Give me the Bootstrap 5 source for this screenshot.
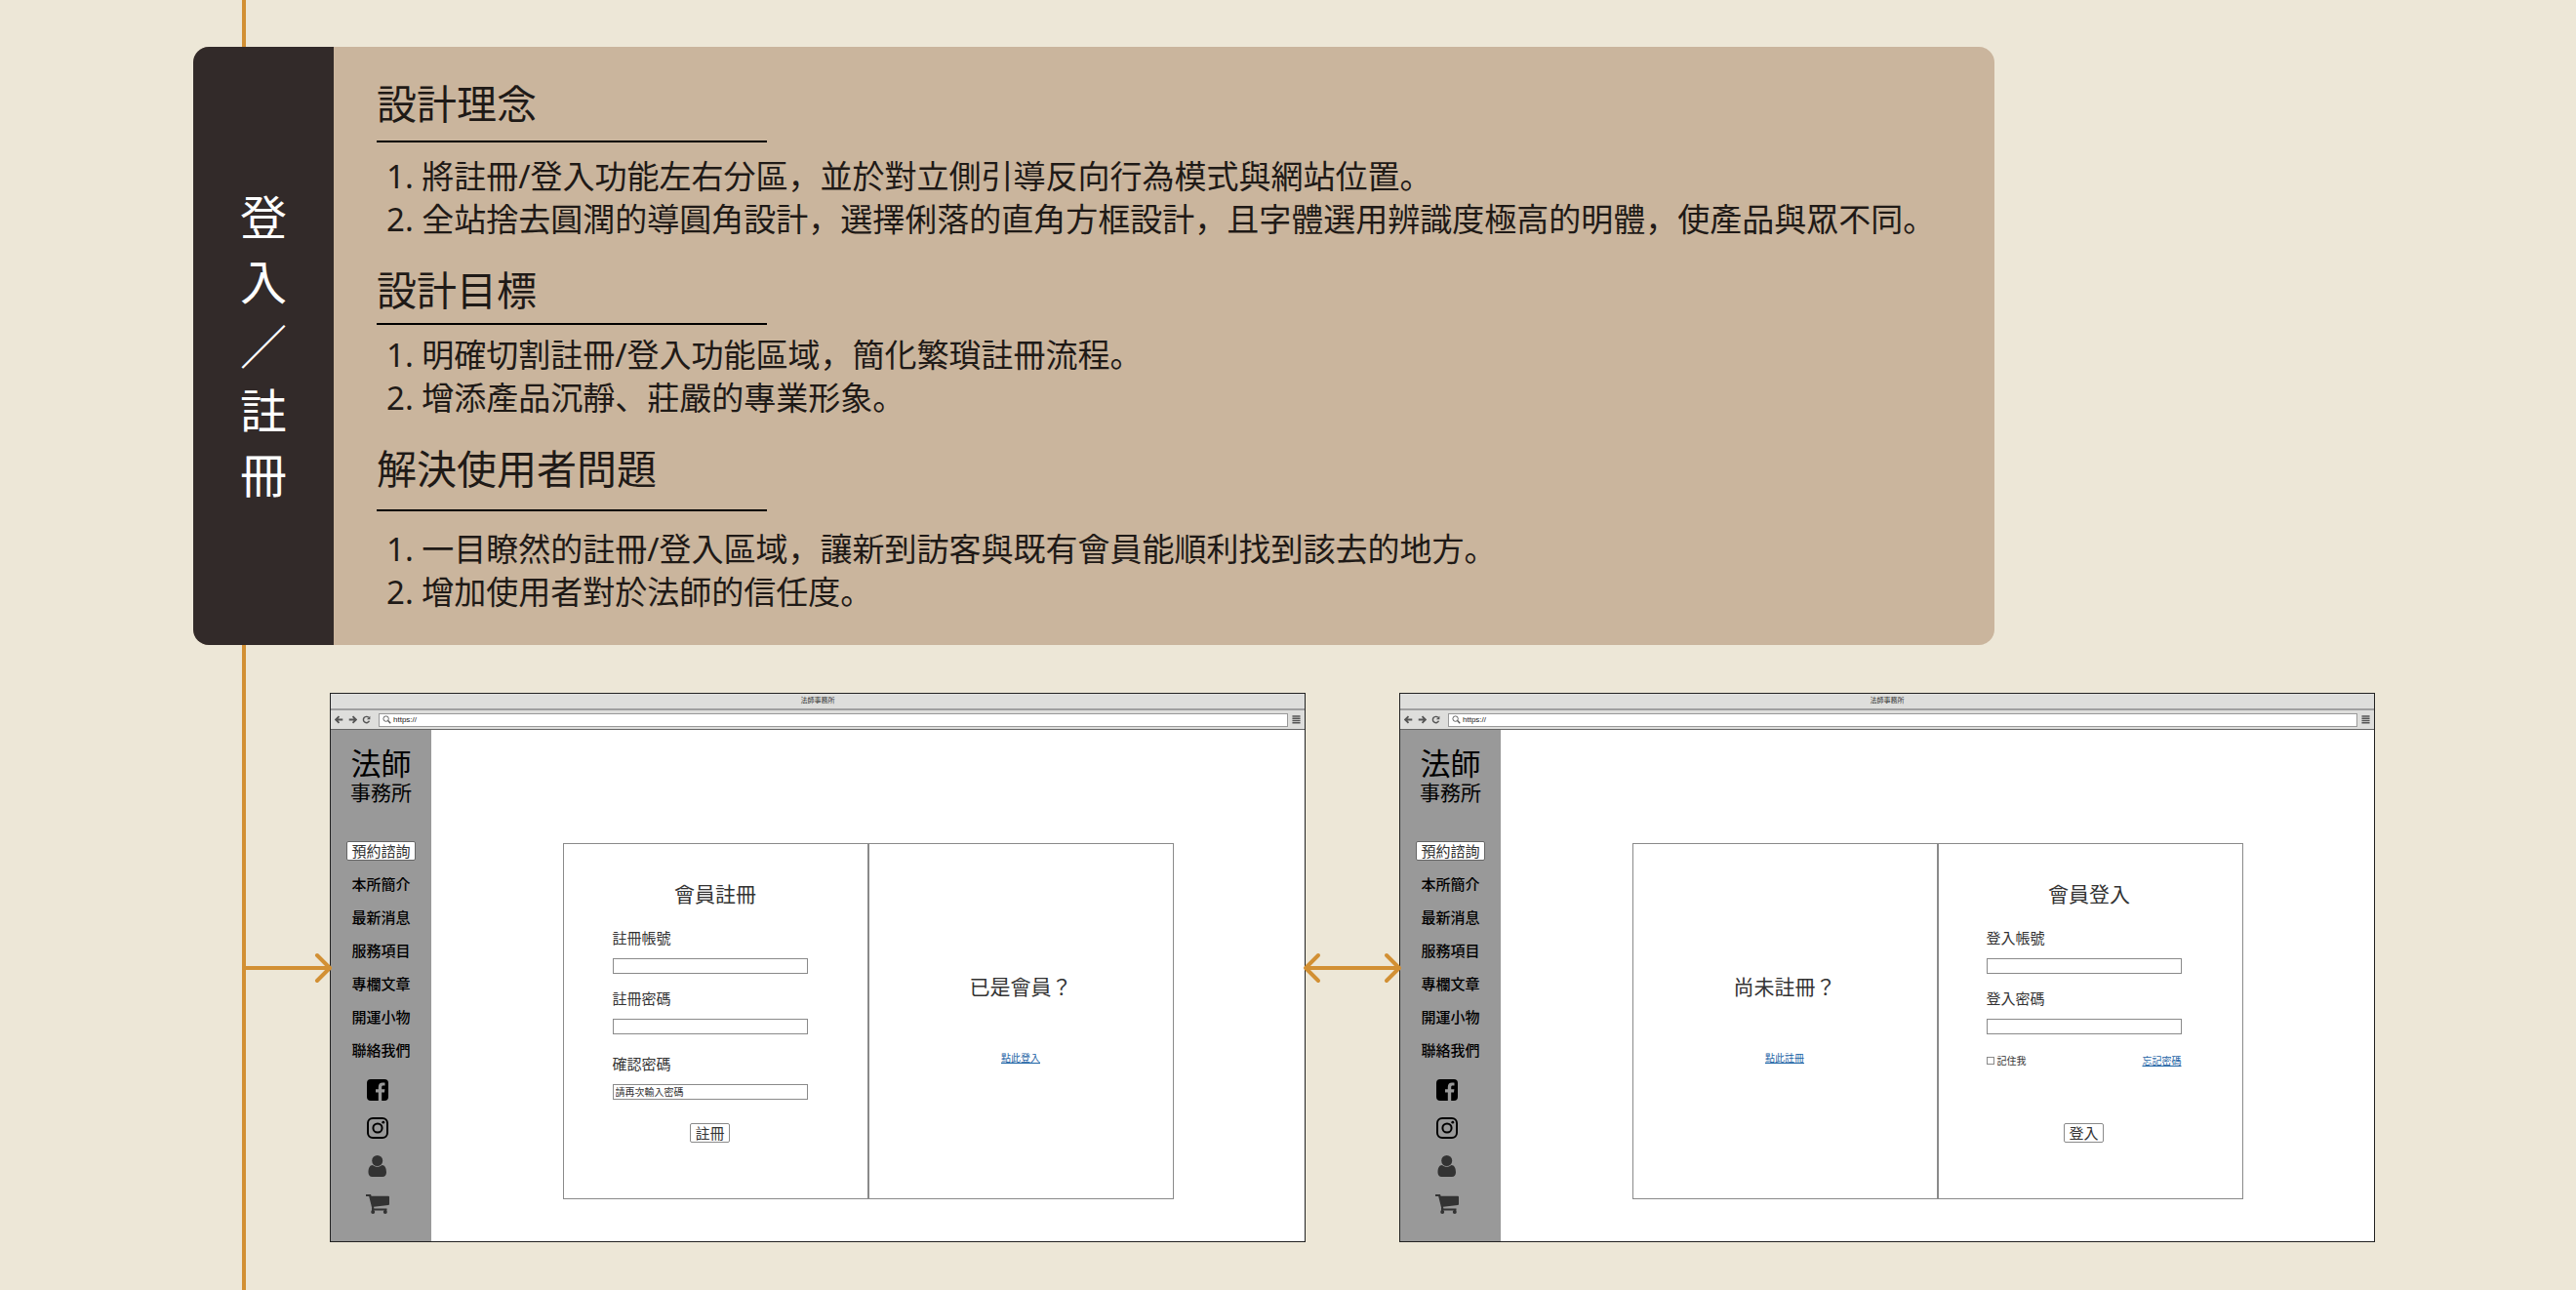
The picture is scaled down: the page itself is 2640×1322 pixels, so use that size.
<!DOCTYPE html>
<html lang="zh-Hant">
<head>
<meta charset="utf-8">
<meta name="viewport" content="width=device-width, initial-scale=1">
<title>登入／註冊</title>
<link href="https://cdn.jsdelivr.net/npm/bootstrap@5.3.0/dist/css/bootstrap.min.css" rel="stylesheet">
<style>
  :root { --paper:#ede7d7; --tan:#cab59d; --ink:#322a29; --gold:#d29034; --line:#8a8a8a; }
  body { background:var(--paper); color:#1f1a17; font-family:"Noto Sans","Noto Sans CJK JP",sans-serif; font-feature-settings:"locl" 0; }
  .board { min-height:100vh; padding:48px 206px 49px 198px; }
  /* timeline that runs behind the whole board */
  .board::before { content:""; position:absolute; top:0; bottom:0; left:248px; width:4px; background:var(--gold); }
  .brief { margin-right:390px; border-radius:16px; background:var(--tan); }
  .brief-side { width:144px; background:var(--ink); }
  .brief-side h1 { width:48px; font-size:48px; line-height:66px; font-weight:400; word-break:break-all; }
  .brief-body { padding:35px 44px 32px; }
  .topic + .topic { margin-top:27px; }
  .topic h2 { font-size:41px; line-height:46px; font-weight:400; margin:0; padding-bottom:2px; }
  .topic hr { width:400px; border:0; border-top:2px solid #000; opacity:1; margin:13px 0; }
  .topic.tight hr { margin:9px 0; }
  .topic.loose hr { margin:17px 0; }
  .topic ol { font-size:33px; line-height:44px; padding-left:10px; }
  .flow-row { padding-left:52px; margin-top:49px; }
  .link-in { width:88px; }
  .link-both { width:96px; }
  .arrow { overflow:visible; stroke:var(--gold); stroke-width:4; fill:none; stroke-linecap:round; stroke-linejoin:round; }

  .browser { border:1px solid #222; background:#fff; color:#333; min-width:0; }
  .browser-title { height:17px; font-size:7px; line-height:13px; background:#dededc; border-bottom:2px solid #a0a0a0; }
  .browser-bar { height:20px; padding:0 4px; background:#dededc; border-bottom:1px solid #666; }
  .browser-bar .tool { border:0; background:none; padding:0; width:9px; height:9px; line-height:0; margin-right:5px; }
  .browser-bar .tool svg { display:block; width:9px; height:9px; }
  .address { height:14px; border:1px solid #999; background:#fff; padding:0 3px; margin:0 4px 0 3px; }
  .address input { font-size:8px; line-height:10px; height:12px; border:0; padding:0 0 0 2px; color:#222; font-family:"Liberation Sans",sans-serif; outline:0; }
  .rail { width:103px; padding-top:17px; background:#999; color:#000; }
  .brand-lg { font-size:31px; line-height:34px; }
  .brand-sm { font-size:21px; line-height:26px; }
  .rail a { color:#000; text-decoration:none; font-size:15px; line-height:20px; font-weight:500; }
  .rail ul { gap:14px; margin-top:37px; }
  .rail .book { width:71px; height:20px; border:1px solid #666; border-radius:2px; background:#fff; color:#333; font-size:15px; line-height:17px; padding:0; }
  .rail .icons { gap:17px; padding-right:7px; margin-top:20px; }
  .rail .icons a { line-height:0; }
  .stage { padding:116px 0 43px; }
  .duo { width:626px; height:365px; border:1px solid var(--line); }
  .duo > :first-child { width:calc(50% + 1px); border-right:2px solid var(--line); }
  .duo > :last-child { width:calc(50% - 1px); }
  .duo h3 { font-size:21px; line-height:26px; font-weight:400; margin:0; }
  .duo a { font-size:10px; line-height:14px; color:#1c63a5; }
  .prompt { padding-top:133px; }
  .prompt a { margin-top:53px; }
  .entry { padding:38px 61px 0 50px; }
  .entry:last-child { padding-left:49px; padding-right:62px; }
  .entry h3 { margin-right:-11px; text-align:center; }
  .entry .field-name { display:block; font-size:15px; line-height:20px; }
  .entry .field { display:block; width:100%; height:16px; border:1px solid var(--line); padding:0 2px; margin-top:11px; font-size:10px; line-height:14px; color:#333; outline:0; }
  .entry .field::placeholder { color:#333; opacity:1; }
  .entry .group { margin-top:15px; }
  .entry .group:first-of-type { margin-top:22px; }
  .entry .group.far { margin-top:20px; }
  .entry .go { width:41px; height:20px; border:1px solid var(--line); border-radius:2px; background:#fff; color:#333; font-size:15px; line-height:17px; padding:0; }
  .keep { font-size:10px; line-height:14px; margin-top:20px; margin-bottom:57px; }
  .keep input { appearance:none; width:8px; height:8px; border:1px solid var(--line); margin:0 3px 0 0; }
</style>
<script src="https://cdn.jsdelivr.net/npm/bootstrap@5.3.0/dist/js/bootstrap.bundle.min.js"></script>
</head>
<body>
<svg width="0" height="0" class="position-absolute" aria-hidden="true">
  <symbol id="i-back" viewBox="0 0 10 10"><path d="M5 1.2 1.2 5 5 8.8M1.5 5H9.2" fill="none" stroke="#555" stroke-width="2"/></symbol>
  <symbol id="i-next" viewBox="0 0 10 10"><path d="M5 1.2 8.8 5 5 8.8M8.5 5H.8" fill="none" stroke="#555" stroke-width="2"/></symbol>
  <symbol id="i-reload" viewBox="0 0 10 10"><path d="M8.3 6.4A3.5 3.5 0 1 1 7.6 2.6" fill="none" stroke="#555" stroke-width="1.6"/><path d="M9.3.8V4.6H5.5Z" fill="#555"/></symbol>
  <symbol id="i-find" viewBox="0 0 10 10"><circle cx="4" cy="4" r="3" fill="none" stroke="#555"/><path d="M6.2 6.2 9.2 9.2" stroke="#555" stroke-width="1.5"/></symbol>
  <symbol id="i-menu" viewBox="0 0 10 10"><path d="M.5 1.2h9M.5 3.7h9M.5 6.2h9M.5 8.7h9" stroke="#555" stroke-width="1.6"/></symbol>
  <symbol id="i-fb" viewBox="0 0 22 22"><path fill-rule="evenodd" d="M4 0h14a4 4 0 0 1 4 4v14a4 4 0 0 1-4 4h-2.8v-8.4H18l.4-3.3h-3.2V8.200c0-1 .3-1.600 1.600-1.600h1.700V3.700c-.3 0-1.300-.1-2.500-.1-2.500 0-4.200 1.500-4.200 4.300v2.400H9v3.300h2.800V22H4a4 4 0 0 1-4-4V4a4 4 0 0 1 4-4Z"/></symbol>
  <symbol id="i-ig" viewBox="0 0 22 22"><rect x="1" y="1" width="20" height="20" rx="5" fill="none" stroke="#000" stroke-width="2"/><circle cx="11" cy="11" r="4.600" fill="none" stroke="#000" stroke-width="2"/><circle cx="16.800" cy="5.200" r="1.400"/></symbol>
  <symbol id="i-user" viewBox="0 0 22 22"><g fill="#333"><circle cx="10.700" cy="5.500" r="5.500"/><path d="M6 10c1.300 1.200 2.800 1.800 4.700 1.800s3.400-.6 4.700-1.800c3.200 0 4.600 3.300 4.600 7.500 0 2.600-1.500 4.500-4 4.500H5.500c-2.500 0-4-1.900-4-4.500C1.500 13.300 2.800 10 6 10Z"/></g></symbol>
  <symbol id="i-cart" viewBox="0 0 24 22"><g fill="#333"><path d="M0 1h5l.6 1.700H23q1 0 1 1v7.200q0 .9-1 1L8 13.700l.4 1.800H21.500v2H6.200V15L3.200 3H0Z"/><circle cx="7.200" cy="19" r="2"/><circle cx="19.800" cy="19" r="2"/><path d="M6 15h2v4H6zM19 17h2v2h-2z"/></g></symbol>
</svg>

<main class="board position-relative">
  <section class="brief d-flex position-relative overflow-hidden">
    <div class="brief-side d-flex flex-shrink-0 align-items-center justify-content-center text-white">
      <h1 class="m-0 text-center">登入／註冊</h1>
    </div>
    <div class="brief-body flex-grow-1">
      <article class="topic">
        <h2>設計理念</h2><hr>
        <ol class="list-unstyled m-0">
          <li>1. 將註冊/登入功能左右分區，並於對立側引導反向行為模式與網站位置。</li>
          <li>2. 全站捨去圓潤的導圓角設計，選擇俐落的直角方框設計，且字體選用辨識度極高的明體，使產品與眾不同。</li>
        </ol>
      </article>
      <article class="topic tight">
        <h2>設計目標</h2><hr>
        <ol class="list-unstyled m-0">
          <li>1. 明確切割註冊/登入功能區域，簡化繁瑣註冊流程。</li>
          <li>2. 增添產品沉靜、莊嚴的專業形象。</li>
        </ol>
      </article>
      <article class="topic loose">
        <h2>解決使用者問題</h2><hr>
        <ol class="list-unstyled m-0">
          <li>1. 一目瞭然的註冊/登入區域，讓新到訪客與既有會員能順利找到該去的地方。</li>
          <li>2. 增加使用者對於法師的信任度。</li>
        </ol>
      </article>
    </div>
  </section>

  <section class="flow-row d-flex align-items-center">
    <div class="link-in flex-shrink-0 position-relative z-1">
      <svg class="arrow d-block" width="88" height="30" viewBox="0 0 88 30"><path d="M0 15H87M75 2 88 15 75 28"/></svg>
    </div>

    <section class="browser flex-fill">
      <div class="browser-title text-center">法師事務所</div>
      <div class="browser-bar d-flex align-items-center">
        <button class="tool" type="button" aria-label="上一頁"><svg><use href="#i-back"/></svg></button>
        <button class="tool" type="button" aria-label="下一頁"><svg><use href="#i-next"/></svg></button>
        <button class="tool" type="button" aria-label="重新整理"><svg><use href="#i-reload"/></svg></button>
        <div class="address d-flex flex-grow-1 align-items-center">
          <svg width="9" height="9"><use href="#i-find"/></svg>
          <input class="flex-grow-1" type="text" value="https://" aria-label="網址">
        </div>
        <button class="tool m-0" type="button" aria-label="選單"><svg><use href="#i-menu"/></svg></button>
      </div>
      <div class="d-flex">
        <nav class="rail d-flex flex-column align-items-center flex-shrink-0">
          <div class="brand-lg">法師</div>
          <div class="brand-sm">事務所</div>
          <ul class="list-unstyled d-flex flex-column align-items-center mb-0">
            <li class="d-flex"><button class="book" type="button">預約諮詢</button></li>
            <li class="d-flex"><a href="#">本所簡介</a></li>
            <li class="d-flex"><a href="#">最新消息</a></li>
            <li class="d-flex"><a href="#">服務項目</a></li>
            <li class="d-flex"><a href="#">專欄文章</a></li>
            <li class="d-flex"><a href="#">開運小物</a></li>
            <li class="d-flex"><a href="#">聯絡我們</a></li>
          </ul>
          <div class="icons d-flex flex-column align-items-center">
            <a href="#" aria-label="Facebook"><svg width="22" height="22"><use href="#i-fb"/></svg></a>
            <a href="#" aria-label="Instagram"><svg width="22" height="22"><use href="#i-ig"/></svg></a>
            <a href="#" aria-label="會員"><svg width="22" height="22"><use href="#i-user"/></svg></a>
            <a href="#" aria-label="購物車"><svg width="24" height="22"><use href="#i-cart"/></svg></a>
          </div>
        </nav>
        <div class="stage flex-grow-1 d-flex justify-content-center">
          <div class="duo d-flex">
            <form class="entry">
              <h3>會員註冊</h3>
              <div class="group"><label class="field-name" for="r-name">註冊帳號</label><input class="field" id="r-name" type="text"></div>
              <div class="group"><label class="field-name" for="r-pass">註冊密碼</label><input class="field" id="r-pass" type="password"></div>
              <div class="group far"><label class="field-name" for="r-again">確認密碼</label><input class="field" id="r-again" type="password" placeholder="請再次輸入密碼"></div>
              <div class="d-flex justify-content-center mt-4"><button class="go" type="button">註冊</button></div>
            </form>
            <div class="prompt d-flex flex-column align-items-center">
              <h3>已是會員？</h3>
              <a href="#">點此登入</a>
            </div>
          </div>
        </div>
      </div>
    </section>

    <div class="link-both flex-shrink-0 position-relative z-1">
      <svg class="arrow d-block" width="96" height="30" viewBox="0 0 96 30"><path d="M1 15H95M13 2 0 15 13 28M83 2 96 15 83 28"/></svg>
    </div>

    <section class="browser flex-fill">
      <div class="browser-title text-center">法師事務所</div>
      <div class="browser-bar d-flex align-items-center">
        <button class="tool" type="button" aria-label="上一頁"><svg><use href="#i-back"/></svg></button>
        <button class="tool" type="button" aria-label="下一頁"><svg><use href="#i-next"/></svg></button>
        <button class="tool" type="button" aria-label="重新整理"><svg><use href="#i-reload"/></svg></button>
        <div class="address d-flex flex-grow-1 align-items-center">
          <svg width="9" height="9"><use href="#i-find"/></svg>
          <input class="flex-grow-1" type="text" value="https://" aria-label="網址">
        </div>
        <button class="tool m-0" type="button" aria-label="選單"><svg><use href="#i-menu"/></svg></button>
      </div>
      <div class="d-flex">
        <nav class="rail d-flex flex-column align-items-center flex-shrink-0">
          <div class="brand-lg">法師</div>
          <div class="brand-sm">事務所</div>
          <ul class="list-unstyled d-flex flex-column align-items-center mb-0">
            <li class="d-flex"><button class="book" type="button">預約諮詢</button></li>
            <li class="d-flex"><a href="#">本所簡介</a></li>
            <li class="d-flex"><a href="#">最新消息</a></li>
            <li class="d-flex"><a href="#">服務項目</a></li>
            <li class="d-flex"><a href="#">專欄文章</a></li>
            <li class="d-flex"><a href="#">開運小物</a></li>
            <li class="d-flex"><a href="#">聯絡我們</a></li>
          </ul>
          <div class="icons d-flex flex-column align-items-center">
            <a href="#" aria-label="Facebook"><svg width="22" height="22"><use href="#i-fb"/></svg></a>
            <a href="#" aria-label="Instagram"><svg width="22" height="22"><use href="#i-ig"/></svg></a>
            <a href="#" aria-label="會員"><svg width="22" height="22"><use href="#i-user"/></svg></a>
            <a href="#" aria-label="購物車"><svg width="24" height="22"><use href="#i-cart"/></svg></a>
          </div>
        </nav>
        <div class="stage flex-grow-1 d-flex justify-content-center">
          <div class="duo d-flex">
            <div class="prompt d-flex flex-column align-items-center">
              <h3>尚未註冊？</h3>
              <a href="#">點此註冊</a>
            </div>
            <form class="entry">
              <h3>會員登入</h3>
              <div class="group"><label class="field-name" for="l-name">登入帳號</label><input class="field" id="l-name" type="text"></div>
              <div class="group"><label class="field-name" for="l-pass">登入密碼</label><input class="field" id="l-pass" type="password"></div>
              <div class="keep d-flex justify-content-between align-items-center">
                <span class="d-flex align-items-center"><input id="l-keep" type="checkbox"><label for="l-keep">記住我</label></span>
                <a href="#">忘記密碼</a>
              </div>
              <div class="d-flex justify-content-center"><button class="go" type="button">登入</button></div>
            </form>
          </div>
        </div>
      </div>
    </section>
  </section>
</main>
</body>
</html>
